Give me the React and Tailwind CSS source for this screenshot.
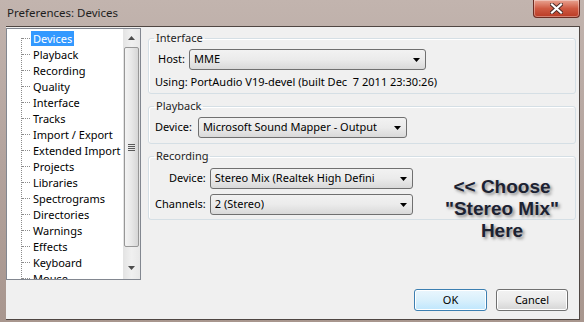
import React from 'react'

const TREE_ITEMS = [
  'Devices', 'Playback', 'Recording', 'Quality', 'Interface', 'Tracks',
  'Import / Export', 'Extended Import', 'Projects', 'Libraries', 'Spectrograms',
  'Directories', 'Warnings', 'Effects', 'Keyboard', 'Mouse',
]

const uiFont = { fontFamily: '"Noto Sans", "Open Sans", sans-serif' }

function Arrow({ up, className }) {
  return (
    <svg width="7" height="4" viewBox="0 0 7 4" className={className}>
      <path d={up ? 'M0 4 L3.5 0 L7 4 Z' : 'M0 0 L7 0 L3.5 4 Z'} fill="currentColor" />
    </svg>
  )
}

function Combo({ value, className }) {
  return (
    <div className={'h-[21px] flex items-center justify-between rounded-[3px] border border-[#707070] bg-gradient-to-b from-[#f2f2f2] via-[#ebebeb] to-[#d9d9d9] pl-[4px] pr-[5px] ' + className}>
      <span className="whitespace-pre truncate">{value}</span>
      <Arrow className="text-black shrink-0" />
    </div>
  )
}

function Group({ label, children, className }) {
  return (
    <fieldset className={'border border-[#d5dfe5] rounded-[3px] shadow-[inset_1px_1px_0_#ffffff] ' + className}>
      <legend className="ml-[5px] px-[2px] leading-[16px] text-[#1e1e1e]">{label}</legend>
      {children}
    </fieldset>
  )
}

function Tree() {
  return (
    <div className="relative w-[135px] h-[252px] mt-[1px] border border-[#828790] bg-white flex overflow-hidden">
      <div className="relative flex-1 pt-[1px]">
        {/* dotted connector */}
        <div className="absolute left-[14px] top-[9px] bottom-0 border-l border-dotted border-[#8c8c8c]" />
        {TREE_ITEMS.map((item, i) => (
          <div key={item} className="relative h-[16px] flex items-center pl-[24px]">
            <div className="absolute left-[15px] top-[8px] w-[8px] border-t border-dotted border-[#8c8c8c]" />
            <span
              className={
                'leading-[15px] px-[2px] whitespace-nowrap ' +
                (i === 0 ? 'bg-[#3399ff] text-white' : 'text-black')
              }
            >
              {item}
            </span>
          </div>
        ))}
      </div>
      {/* scrollbar */}
      <div className="w-[17px] h-full bg-gradient-to-r from-[#e3e3e3] via-[#f0f0f0] to-[#e8e8e8] flex flex-col items-center">
        <div className="h-[18px] flex items-center justify-center text-[#4d4d4d]">
          <Arrow up />
        </div>
        <div className="w-[15px] h-[200px] rounded-[2px] border border-[#979797] bg-gradient-to-r from-[#f3f3f3] via-[#e8e8e8] to-[#d6d6d6] flex items-center justify-center">
          <div className="flex flex-col gap-[1px]">
            <div className="w-[7px] h-[1px] bg-[#5a5a5a]" />
            <div className="w-[7px] h-[1px] bg-[#5a5a5a]" />
            <div className="w-[7px] h-[1px] bg-[#5a5a5a]" />
            <div className="w-[7px] h-[1px] bg-[#5a5a5a]" />
          </div>
        </div>
        <div className="flex-1" />
        <div className="h-[18px] flex items-center justify-center text-[#4d4d4d] mb-[2px]">
          <Arrow />
        </div>
      </div>
    </div>
  )
}

export default function App() {
  return (
    <div
      className="relative w-[584px] h-[322px] overflow-hidden bg-gradient-to-b from-[#c2b4ae] via-[#b3a39d] to-[#a8968e] flex flex-col text-[11px]"
      style={uiFont}
    >
      {/* title bar */}
      <div className="h-[26px] flex items-center pl-[7px] text-[#1e1e1e] text-[11.5px]">
        Preferences: Devices
      </div>
      <div className="absolute right-[4px] top-0 w-[47px] h-[18px] rounded-b-[4px] border border-[#6b2c22] border-t-0 bg-gradient-to-b from-[#e8a392] via-[#cf5a42] to-[#b93a24] flex items-center justify-center shadow-[inset_0_0_0_1px_rgba(255,255,255,0.35)]">
        <svg width="13" height="11" viewBox="0 0 13 11">
          <path d="M2 1.5 L11 9.5 M11 1.5 L2 9.5" stroke="#4a2a26" strokeWidth="4" strokeLinecap="square" />
          <path d="M2 1.5 L11 9.5 M11 1.5 L2 9.5" stroke="#ffffff" strokeWidth="2.2" strokeLinecap="square" />
        </svg>
      </div>

      {/* client area */}
      <div className="ml-[6px] mr-[4px] mb-[2px] flex-1 flex flex-col bg-[#f0f0f0] border-t border-r border-b border-[#4f4642]">
        <div className="flex">
          <Tree />
          <div className="relative flex-1 flex flex-col gap-[4px] pt-[3px] pl-[7px] pr-[3px]">
            <Group label="Interface" className="pb-[3px] pt-[3px]">
              <div className="flex items-center pl-[9px]">
                <span className="mr-[4px]">Host:</span>
                <Combo value="MME" className="w-[237px]" />
              </div>
              <div className="pl-[6px] mt-[4px] leading-[16px] whitespace-pre">
                Using: PortAudio V19-devel (built Dec  7 2011 23:30:26)
              </div>
            </Group>
            <Group label="Playback" className="pt-[3px] pb-[5px]">
              <div className="flex items-center pl-[6px]">
                <span className="mr-[6px]">Device:</span>
                <Combo value="Microsoft Sound Mapper - Output" className="w-[209px]" />
              </div>
            </Group>
            <Group label="Recording" className="pt-[4px] pb-[4px]">
              <div className="grid grid-cols-[auto_auto] justify-start items-center gap-y-[5px] gap-x-[4px] pl-[6px]">
                <span className="text-right">Device:</span>
                <Combo value="Stereo Mix (Realtek High Defini" className="w-[203px]" />
                <span className="text-right">Channels:</span>
                <Combo value="2 (Stereo)" className="w-[203px]" />
              </div>
            </Group>

            {/* annotation */}
            <div
              className="absolute left-[296px] top-[149px] w-[130px] text-center font-bold text-[19px] leading-[22px] text-[#1c2232] [text-shadow:2px_2px_3px_rgba(60,60,60,0.55)]"
              style={{ fontFamily: '"Liberation Sans", Arial, sans-serif' }}
            >
              &lt;&lt; Choose<br />"Stereo Mix"<br />Here
            </div>
          </div>
        </div>

        <div className="flex justify-end gap-[9px] pr-[11px] mt-[9px]">
          <button className="w-[73px] h-[22px] rounded-[3px] border border-[#3c7fb1] bg-gradient-to-b from-[#eaf6fd] via-[#d9f0fc] to-[#bee6fd] shadow-[inset_0_0_0_1px_#ffffff]">
            OK
          </button>
          <button className="w-[72px] h-[22px] rounded-[3px] border border-[#707070] bg-gradient-to-b from-[#f2f2f2] via-[#ebebeb] to-[#d5d5d5] shadow-[inset_0_0_0_1px_#ffffff]">
            Cancel
          </button>
        </div>
      </div>
    </div>
  )
}
